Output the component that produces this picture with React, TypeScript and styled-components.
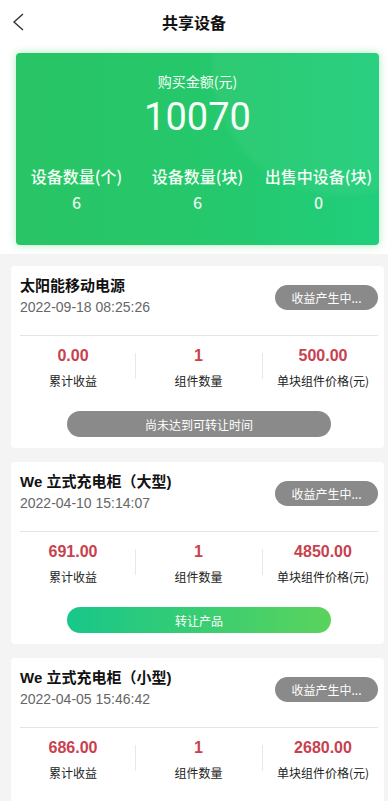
import React from "react";
import styled, { createGlobalStyle } from "styled-components";

const GlobalStyle = createGlobalStyle`
  * { box-sizing: border-box; }
  html, body { margin: 0; padding: 0; background: #f4f4f4; }
  body {
    font-family: "Liberation Sans", "Noto Sans CJK SC", sans-serif;
    color: #222;
  }
`;

const Page = styled.div`
  width: 388px;
  min-height: 801px;
  background: #f4f4f4;
`;

const Top = styled.div`
  background: #fff;
  padding-bottom: 9px;
`;

const Header = styled.div`
  position: relative;
  height: 44px;
  display: flex;
  align-items: center;
  justify-content: center;
`;

const BackButton = styled.div`
  position: absolute;
  left: 10px;
  top: 9px;
  width: 20px;
  height: 24px;
  display: flex;
  align-items: center;
`;

const Title = styled.h1`
  margin: 0;
  font-size: 16px;
  font-weight: 700;
  line-height: 22px;
  color: #111;
  font-family: "Noto Sans CJK SC", sans-serif;
`;

const Summary = styled.div`
  margin: 9px 9px 0 16px;
  height: 192px;
  border-radius: 4px;
  background:
    radial-gradient(circle at 90% 6%, rgba(255, 255, 255, 0.045) 0, rgba(255, 255, 255, 0.045) 34%, rgba(255, 255, 255, 0) 36%),
    linear-gradient(90deg, #29c465 0%, #25c86c 55%, #20ce7b 100%);
  box-shadow: 0 0 8px rgba(70, 210, 110, 0.45);
  padding-top: 18px;
  color: #fff;
  display: flex;
  flex-direction: column;
  align-items: center;
`;

const SummaryLabel = styled.div`
  font-size: 14px;
  line-height: 20px;
  font-family: "Noto Sans CJK SC", sans-serif;
  color: #f4fff6;
`;

const SummaryAmount = styled.div`
  font-family: Roboto, "Liberation Sans", sans-serif;
  font-size: 38px;
  line-height: 46px;
  margin-top: 3px;
  color: #f7fff8;
`;

const SummaryStats = styled.div`
  margin-top: 25px;
  width: 100%;
  display: grid;
  grid-template-columns: repeat(3, 1fr);
`;

const SummaryStat = styled.div`
  display: flex;
  flex-direction: column;
  align-items: center;
`;

const SummaryStatLabel = styled.div`
  font-size: 16px;
  line-height: 22px;
  font-weight: 500;
  font-family: "Noto Sans CJK SC", sans-serif;
  color: #f2fff4;
  white-space: nowrap;
`;

const SummaryStatValue = styled.div`
  margin-top: 4px;
  font-size: 16px;
  line-height: 22px;
  font-weight: 500;
  font-family: "Noto Sans CJK SC", sans-serif;
  color: #e6f8ea;
`;

const List = styled.div`
  padding: 12px 4px 0 11px;
  display: flex;
  flex-direction: column;
  gap: 14px;
`;

const Card = styled.div`
  background: #fff;
  border-radius: 4px;
  height: 182px;
  overflow: hidden;
`;

const CardHead = styled.div`
  display: flex;
  align-items: center;
  justify-content: space-between;
  margin: 0 6px 0 9px;
  padding: 11px 0 17px;
  border-bottom: 1px solid #e4e4e4;
`;

const CardInfo = styled.div`
  display: flex;
  flex-direction: column;
`;

const CardTitle = styled.div`
  font-size: 15px;
  line-height: 18px;
  font-weight: 700;
  color: #111;
  font-family: "Liberation Sans", "Noto Sans CJK SC", sans-serif;
`;

const CardDate = styled.div`
  font-size: 14px;
  line-height: 21px;
  margin-top: 2px;
  color: #666;
  font-family: "Liberation Sans", "Noto Sans CJK SC", sans-serif;
`;

const Badge = styled.div`
  width: 103px;
  height: 25px;
  border-radius: 13px;
  background: #8a8a8a;
  color: #fff;
  font-size: 12px;
  display: flex;
  align-items: center;
  justify-content: center;
  font-family: "Noto Sans CJK SC", sans-serif;
`;

const Stats = styled.div`
  display: grid;
  grid-template-columns: 124px 127px 1fr;
  padding-top: 9px;
`;

const Stat = styled.div<{ $divider?: boolean }>`
  position: relative;
  display: flex;
  flex-direction: column;
  align-items: center;
  &::before {
    content: "";
    display: ${(p) => (p.$divider ? "block" : "none")};
    position: absolute;
    left: 0;
    top: 8px;
    width: 1px;
    height: 26px;
    background: #e8e8e8;
  }
`;

const StatValue = styled.div`
  font-size: 16px;
  line-height: 22px;
  font-weight: 700;
  color: #c8414e;
`;

const StatLabel = styled.div`
  font-size: 12px;
  line-height: 20px;
  margin-top: 4px;
  color: #222;
  font-family: "Noto Sans CJK SC", sans-serif;
  white-space: nowrap;
`;

const ActionRow = styled.div`
  display: flex;
  justify-content: center;
  margin-top: 20px;
  padding-left: 3px;
`;

const Action = styled.div<{ $active?: boolean }>`
  width: 264px;
  height: 26px;
  border-radius: 13px;
  background: ${(p) =>
    p.$active ? "linear-gradient(90deg, #17c78a 0%, #5bd35c 100%)" : "#8a8a8a"};
  color: #fff;
  font-size: 12px;
  display: flex;
  align-items: center;
  justify-content: center;
  font-family: "Noto Sans CJK SC", sans-serif;
`;

type Device = {
  name: string;
  date: string;
  income: string;
  count: string;
  price: string;
  action: string;
  active: boolean;
};

const devices: Device[] = [
  { name: "太阳能移动电源", date: "2022-09-18 08:25:26", income: "0.00", count: "1", price: "500.00", action: "尚未达到可转让时间", active: false },
  { name: "We 立式充电柜（大型)", date: "2022-04-10 15:14:07", income: "691.00", count: "1", price: "4850.00", action: "转让产品", active: true },
  { name: "We 立式充电柜（小型)", date: "2022-04-05 15:46:42", income: "686.00", count: "1", price: "2680.00", action: "转让产品", active: true },
];

export default function App() {
  return (
    <Page>
      <GlobalStyle />
      <Top>
        <Header>
          <BackButton>
            <svg width="14" height="20" viewBox="0 0 14 20">
              <polyline points="13,3 4,11 13,19" fill="none" stroke="#333" strokeWidth="1.4" />
            </svg>
          </BackButton>
          <Title>共享设备</Title>
        </Header>
        <Summary>
          <SummaryLabel>购买金额(元)</SummaryLabel>
          <SummaryAmount>10070</SummaryAmount>
          <SummaryStats>
            <SummaryStat>
              <SummaryStatLabel>设备数量(个)</SummaryStatLabel>
              <SummaryStatValue>6</SummaryStatValue>
            </SummaryStat>
            <SummaryStat>
              <SummaryStatLabel>设备数量(块)</SummaryStatLabel>
              <SummaryStatValue>6</SummaryStatValue>
            </SummaryStat>
            <SummaryStat>
              <SummaryStatLabel>出售中设备(块)</SummaryStatLabel>
              <SummaryStatValue>0</SummaryStatValue>
            </SummaryStat>
          </SummaryStats>
        </Summary>
      </Top>
      <List>
        {devices.map((d) => (
          <Card key={d.date}>
            <CardHead>
              <CardInfo>
                <CardTitle>{d.name}</CardTitle>
                <CardDate>{d.date}</CardDate>
              </CardInfo>
              <Badge>收益产生中...</Badge>
            </CardHead>
            <Stats>
              <Stat>
                <StatValue>{d.income}</StatValue>
                <StatLabel>累计收益</StatLabel>
              </Stat>
              <Stat $divider>
                <StatValue>{d.count}</StatValue>
                <StatLabel>组件数量</StatLabel>
              </Stat>
              <Stat $divider>
                <StatValue>{d.price}</StatValue>
                <StatLabel>单块组件价格(元)</StatLabel>
              </Stat>
            </Stats>
            <ActionRow>
              <Action $active={d.active}>{d.action}</Action>
            </ActionRow>
          </Card>
        ))}
      </List>
    </Page>
  );
}
